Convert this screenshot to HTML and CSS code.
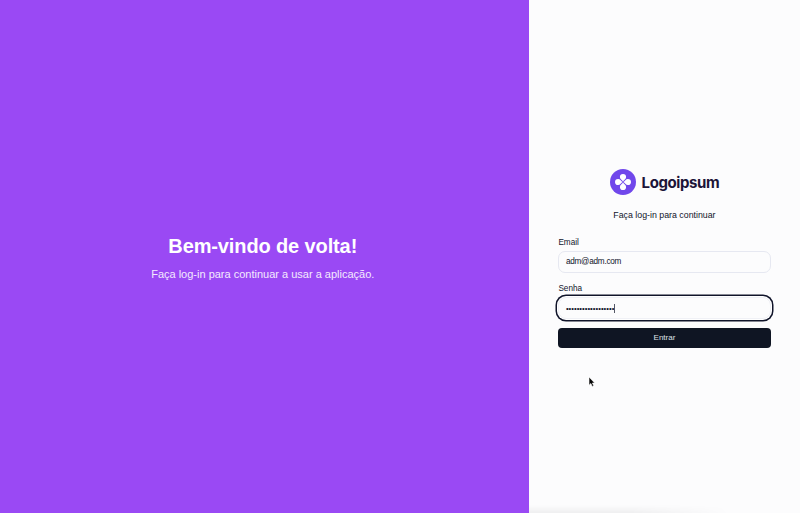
FILE: index.html
```html
<!DOCTYPE html>
<html lang="pt-BR">
<head>
<meta charset="utf-8">
<title>Log-in</title>
<link rel="stylesheet" href="styles.css">
</head>
<body>
<main class="page">
  <section class="hero">
    <h1>Bem-vindo de volta!</h1>
    <p>Faça log-in para continuar a usar a aplicação.</p>
  </section>
  <section class="panel">
    <form class="login">
      <div class="brand">
        <svg class="mark" viewBox="0 0 26 26" aria-hidden="true">
          <circle cx="13" cy="13" r="13" fill="#7047eb"/>
          <g fill="#fff">
            <path id="petal" d="M13 12.600C12.200 11.200 9.900 10.200 9.900 8.100a3.100 3.100 0 0 1 6.200 0c0 2.100-2.300 3.100-3.100 4.500z"/>
            <use href="#petal" transform="rotate(90 13 13)"/>
            <use href="#petal" transform="rotate(180 13 13)"/>
            <use href="#petal" transform="rotate(270 13 13)"/>
          </g>
        </svg>
        <span class="name">Logoipsum</span>
      </div>
      <p class="lead">Faça log-in para continuar</p>
      <label>Email</label>
      <div class="field">adm@adm.com</div>
      <label>Senha</label>
      <div class="field focused"><span class="dots">••••••••••••••••••</span><span class="caret"></span></div>
      <button type="button">Entrar</button>
    </form>
  </section>
</main>
<div class="edge-shadow"></div>
<svg class="cursor" viewBox="0 0 8 12" aria-hidden="true"><path d="M1 1v8.200l1.900-1.700 1.300 2.900 1.500-.7-1.300-2.700h2.300z" fill="#050505" stroke="#fff" stroke-width=".6"/></svg>
</body>
</html>
```
FILE: styles.css
```css
* { box-sizing: border-box; }
body { margin: 0; font-family: "Liberation Sans", Arial, sans-serif; color: #10142a; }
h1, p { margin: 0; white-space: nowrap; }
.page { display: grid; grid-template-columns: 528.500px 1fr; height: 513px; overflow: hidden; }
.hero { background: #9a49f4; color: #fff; display: flex; flex-direction: column; align-items: center; justify-content: center; padding: 0 3px 0 0; }
.hero h1 { font-size: 20px; line-height: 26px; letter-spacing: -.12px; }
.hero p { font-size: 11px; line-height: 14px; margin-top: 8px; color: #f4eafe; }
.panel { background: #fcfcfd; padding: 169px 29.500px 0 29.900px; }
.login { display: flex; flex-direction: column; }
.brand { display: flex; align-items: center; justify-content: center; gap: 6px; height: 26px; }
.mark { width: 26px; height: 26px; }
.name { font: 700 15px/26px Inter, sans-serif; letter-spacing: -.4px; color: #1c1538; padding-top: 2px; }
.lead { font-size: 8.800px; line-height: 12px; margin: 14px 0 16px; text-align: center; }
label { font-size: 8.200px; line-height: 12px; margin-bottom: 2px; letter-spacing: 0; }
.field { height: 21.500px; border: 1px solid #e6e8f1; border-radius: 7px; padding: 0 6px 1px 6.500px; display: flex; align-items: center; font-size: 8.200px; letter-spacing: -.24px; margin-bottom: 10.500px; background: #fcfcfd; }
.focused { height: 22px; border-radius: 8px; box-shadow: 0 0 0 1px #fff, 0 0 0 2.500px #10142a; border-color: #f0f1f6; margin-bottom: 9px; padding-bottom: 0; letter-spacing: 0; }
.dots { font-size: 7.700px; }
.caret { width: 1px; height: 9px; background: #555866; }
button { height: 20px; border: 0; border-radius: 4px; background: #0f1523; color: #dfe1e6; font: 8px "Liberation Sans", Arial, sans-serif; padding: 0 0 1px; }
.edge-shadow { position: absolute; left: 529px; right: 70px; bottom: 0; height: 8px; background: linear-gradient(transparent, rgba(0, 0, 0, .05)); mask-image: linear-gradient(90deg, #000 50%, transparent); }
.cursor { position: absolute; left: 588px; top: 376px; width: 8px; height: 12px; }
```
